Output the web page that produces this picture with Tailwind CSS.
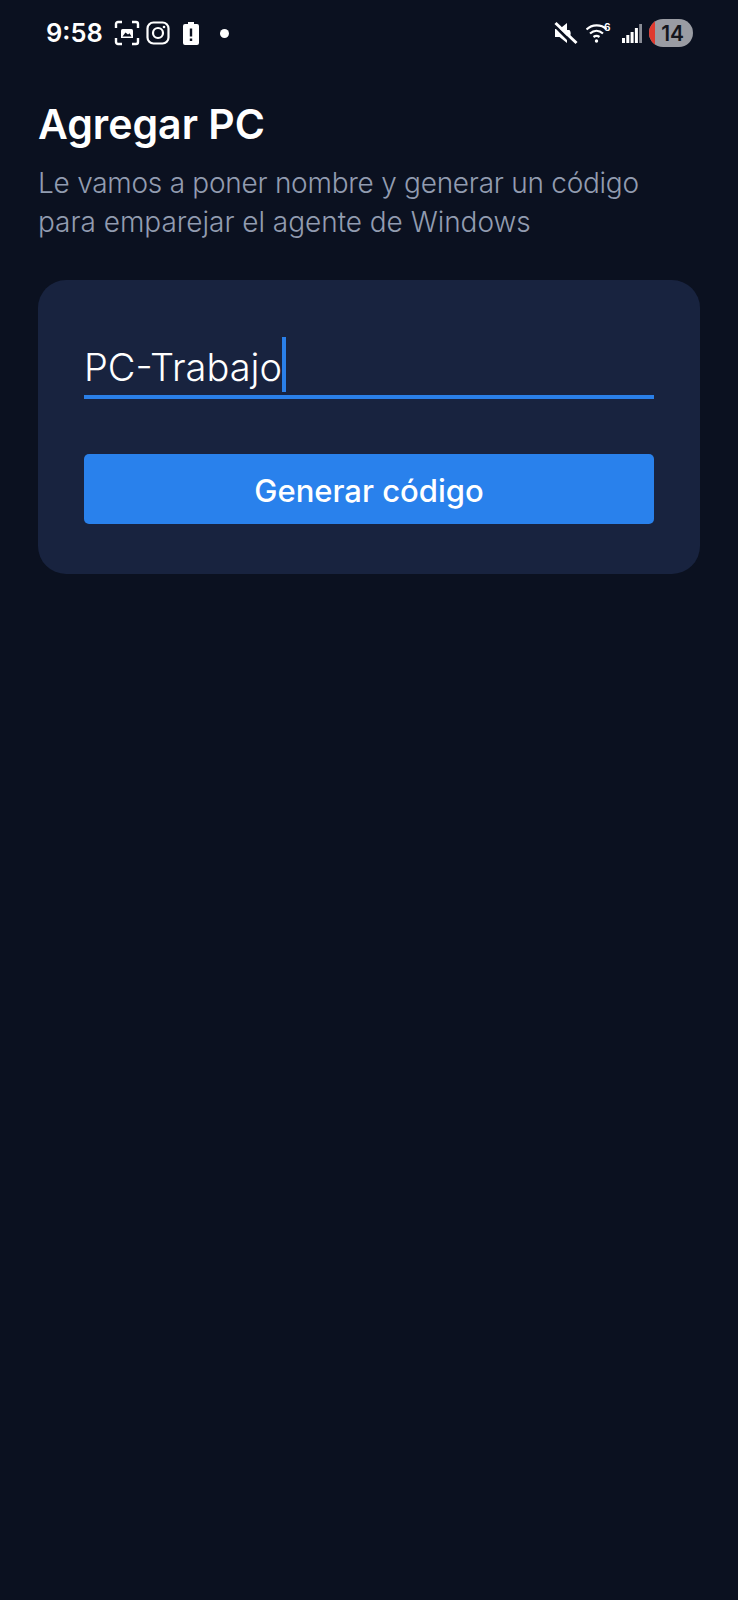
<!doctype html>
<html><head><meta charset="utf-8"><script src="https://cdn.jsdelivr.net/npm/@tailwindcss/browser@4"></script></head>
<body class="bg-[#0b1120]">
<div class="w-[738px] h-[1600px] bg-[#0b1120] font-['Inter',sans-serif] overflow-hidden">
  <div class="h-[66px] flex items-center justify-between pl-[46px] pr-[45px]">
    <div class="flex items-center">
      <span class="text-white text-[25.500px] font-semibold leading-none w-[68px]">9:58</span>
      <svg class="w-[26px] h-[26px]" viewBox="0 0 26 26" fill="none" stroke="#fff" stroke-width="2.400"><path d="M2 8V4a2 2 0 0 1 2-2h4M18 2h4a2 2 0 0 1 2 2v4M24 18v4a2 2 0 0 1-2 2h-4M8 24H4a2 2 0 0 1-2-2v-4"/><path d="M7 18v-7.500a1.500 1.500 0 0 1 1.500-1.500h9a1.500 1.500 0 0 1 1.500 1.500V18z" fill="#fff" stroke="none"/><path d="M8.500 16.500l3-4 2.500 2 1.500-1.200 2 3.200z" fill="#0b1120" stroke="none"/></svg>
      <svg class="w-[24px] h-[24px] ml-[6px]" viewBox="0 0 24 24" fill="none" stroke="#fff" stroke-width="2.200"><rect x="1.500" y="1.500" width="21" height="21" rx="6"/><circle cx="12" cy="12" r="5"/><circle cx="18" cy="6" r="1.300" fill="#fff" stroke="none"/></svg>
      <svg class="w-[16px] h-[24px] ml-[13px]" viewBox="0 0 16 24"><path fill-rule="evenodd" fill="#fff" d="M5 1h6v2h3a2 2 0 0 1 2 2v17a2 2 0 0 1-2 2H2a2 2 0 0 1-2-2V5a2 2 0 0 1 2-2h3zM6.800 7.500v8h2.400v-8zM6.800 17.500v2.500h2.400v-2.500z"/></svg>
      <span class="w-[9px] h-[9px] rounded-full bg-white ml-[21px]"></span>
    </div>
    <div class="flex items-center">
      <svg class="w-[24px] h-[24px]" viewBox="0 0 24 24" fill="#fff"><path d="M1 8h4.500L13 2v20l-7.500-6H1z"/><path d="M13 9h2.500c1.500 2 1.500 4 .5 6L13 13z"/><path d="M0 4l20 20" stroke="#0b1120" stroke-width="3"/><path d="M1.500 2l21 20" stroke="#fff" stroke-width="3"/></svg>
      <svg class="w-[28px] h-[24px] ml-[8px]" viewBox="0 0 28 24" fill="none" stroke="#fff" stroke-width="2.200"><path d="M0.500 8.500C6 3 15 3 20.500 8M4 12.500c4-3.500 9-3.500 13 0M7.500 16c2-1.500 4-1.500 6 0"/><circle cx="10.500" cy="20" r="1.700" fill="#fff" stroke="none"/><text x="18" y="10" fill="#fff" stroke="none" font-size="10" font-weight="700" font-family="Inter">6</text></svg>
      <svg class="w-[20px] h-[22px] ml-[8px]" viewBox="0 0 20 22" fill="#fff"><rect x="0" y="16" width="3" height="5"/><rect x="4.300" y="13" width="3" height="8"/><rect x="8.600" y="10" width="3" height="11"/><rect x="12.900" y="6" width="3" height="15"/><rect x="17.200" y="2" width="2.800" height="19" fill="#8a8d96"/></svg>
      <div class="relative w-[44px] h-[28px] ml-[7px] rounded-full bg-[#9a9ca3] overflow-hidden flex items-center justify-end pr-[9px]">
        <span class="absolute left-0 top-0 h-full w-[6px] bg-[#e03a2f]"></span>
        <span class="text-[#14161d] text-[21px] font-semibold leading-none">14</span>
      </div>
    </div>
  </div>
  <div class="px-[38px]">
    <h1 class="text-white text-[41px] font-semibold leading-[48px] mt-[34px] tracking-[0px]">Agregar PC</h1>
    <p class="text-[#929cb0] text-[28px] leading-[39px] mt-[16px] tracking-[-0.26px] font-light whitespace-nowrap">Le vamos a poner nombre y generar un código<br><span class="tracking-[-0.03px]">para emparejar el agente de Windows</span></p>
    <div class="mt-[38px] h-[294px] rounded-[28px] bg-[#18233f] px-[46px] pt-[56px]">
      <div class="h-[63px] border-b-[4px] border-[#2a7fe8] flex items-start">
        <span class="text-white text-[38px] leading-[46px] mt-[8px] font-light">PC-Trabajo</span>
        <span class="w-[4px] h-[55px] mt-[1px] bg-[#2a7fe8]"></span>
      </div>
      <div class="mt-[55px] h-[70px] pt-[5px] rounded-[5px] bg-[#2981ec] flex items-center justify-center text-white text-[31px] font-medium">Generar código</div>
    </div>
  </div>
</div>
</body></html>
